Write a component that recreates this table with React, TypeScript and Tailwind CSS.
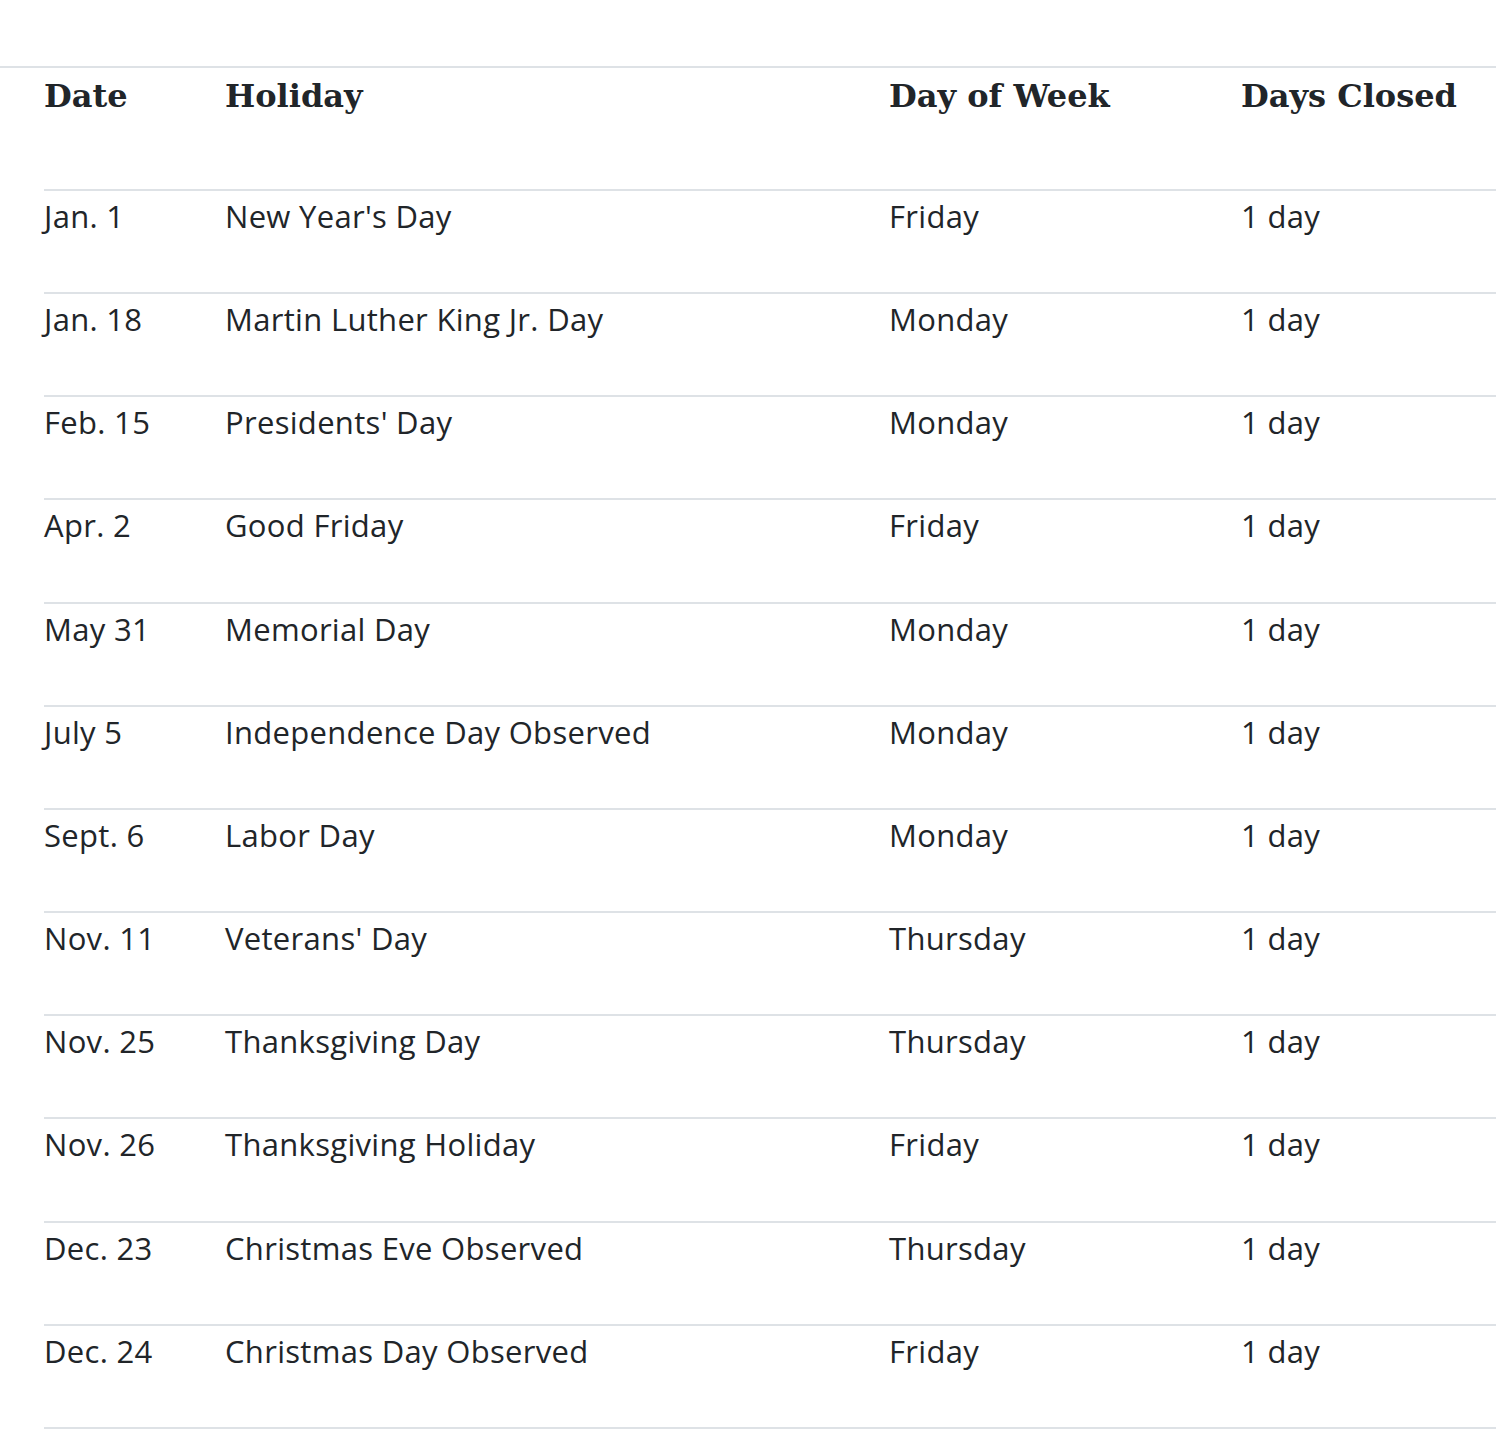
const holidays = [
  { date: "Jan. 1", name: "New Year's Day", day: "Friday" },
  { date: "Jan. 18", name: "Martin Luther King Jr. Day", day: "Monday" },
  { date: "Feb. 15", name: "Presidents' Day", day: "Monday" },
  { date: "Apr. 2", name: "Good Friday", day: "Friday" },
  { date: "May 31", name: "Memorial Day", day: "Monday" },
  { date: "July 5", name: "Independence Day Observed", day: "Monday" },
  { date: "Sept. 6", name: "Labor Day", day: "Monday" },
  { date: "Nov. 11", name: "Veterans' Day", day: "Thursday" },
  { date: "Nov. 25", name: "Thanksgiving Day", day: "Thursday" },
  { date: "Nov. 26", name: "Thanksgiving Holiday", day: "Friday" },
  { date: "Dec. 23", name: "Christmas Eve Observed", day: "Thursday" },
  { date: "Dec. 24", name: "Christmas Day Observed", day: "Friday" },
]

export default function App() {
  return (
    <div className="min-h-screen overflow-hidden bg-white pt-[66px] text-[#212529]">
      {/* top rule runs edge to edge */}
      <div className="border-t-2 border-[#dee2e6]" />

      <div className="pl-[44px]">
        <table className="w-[1452px] table-fixed border-collapse">
          <colgroup>
            <col className="w-[181px]" />
            <col className="w-[664px]" />
            <col className="w-[352px]" />
            <col />
          </colgroup>
          <thead>
            <tr className="h-[122px] border-b-2 border-[#dee2e6] align-top font-['DejaVu_Serif',serif] text-[32px] font-bold leading-none">
              <th className="p-0 pt-[12px] text-left">Date</th>
              <th className="p-0 pt-[12px] text-left">Holiday</th>
              <th className="p-0 pt-[12px] text-left">Day of Week</th>
              <th className="p-0 pt-[12px] text-left">Days Closed</th>
            </tr>
          </thead>
          <tbody className="font-['Open_Sans',sans-serif] text-[31px] leading-none tracking-[0.01em]">
            {holidays.map((h) => (
              <tr key={h.date} className="h-[103.17px] border-b-2 border-[#dee2e6] align-top">
                <td className="p-0 pt-[10px]">{h.date}</td>
                <td className="p-0 pt-[10px]">{h.name}</td>
                <td className="p-0 pt-[10px]">{h.day}</td>
                <td className="p-0 pt-[10px]">1 day</td>
              </tr>
            ))}
          </tbody>
        </table>
      </div>
    </div>
  )
}
